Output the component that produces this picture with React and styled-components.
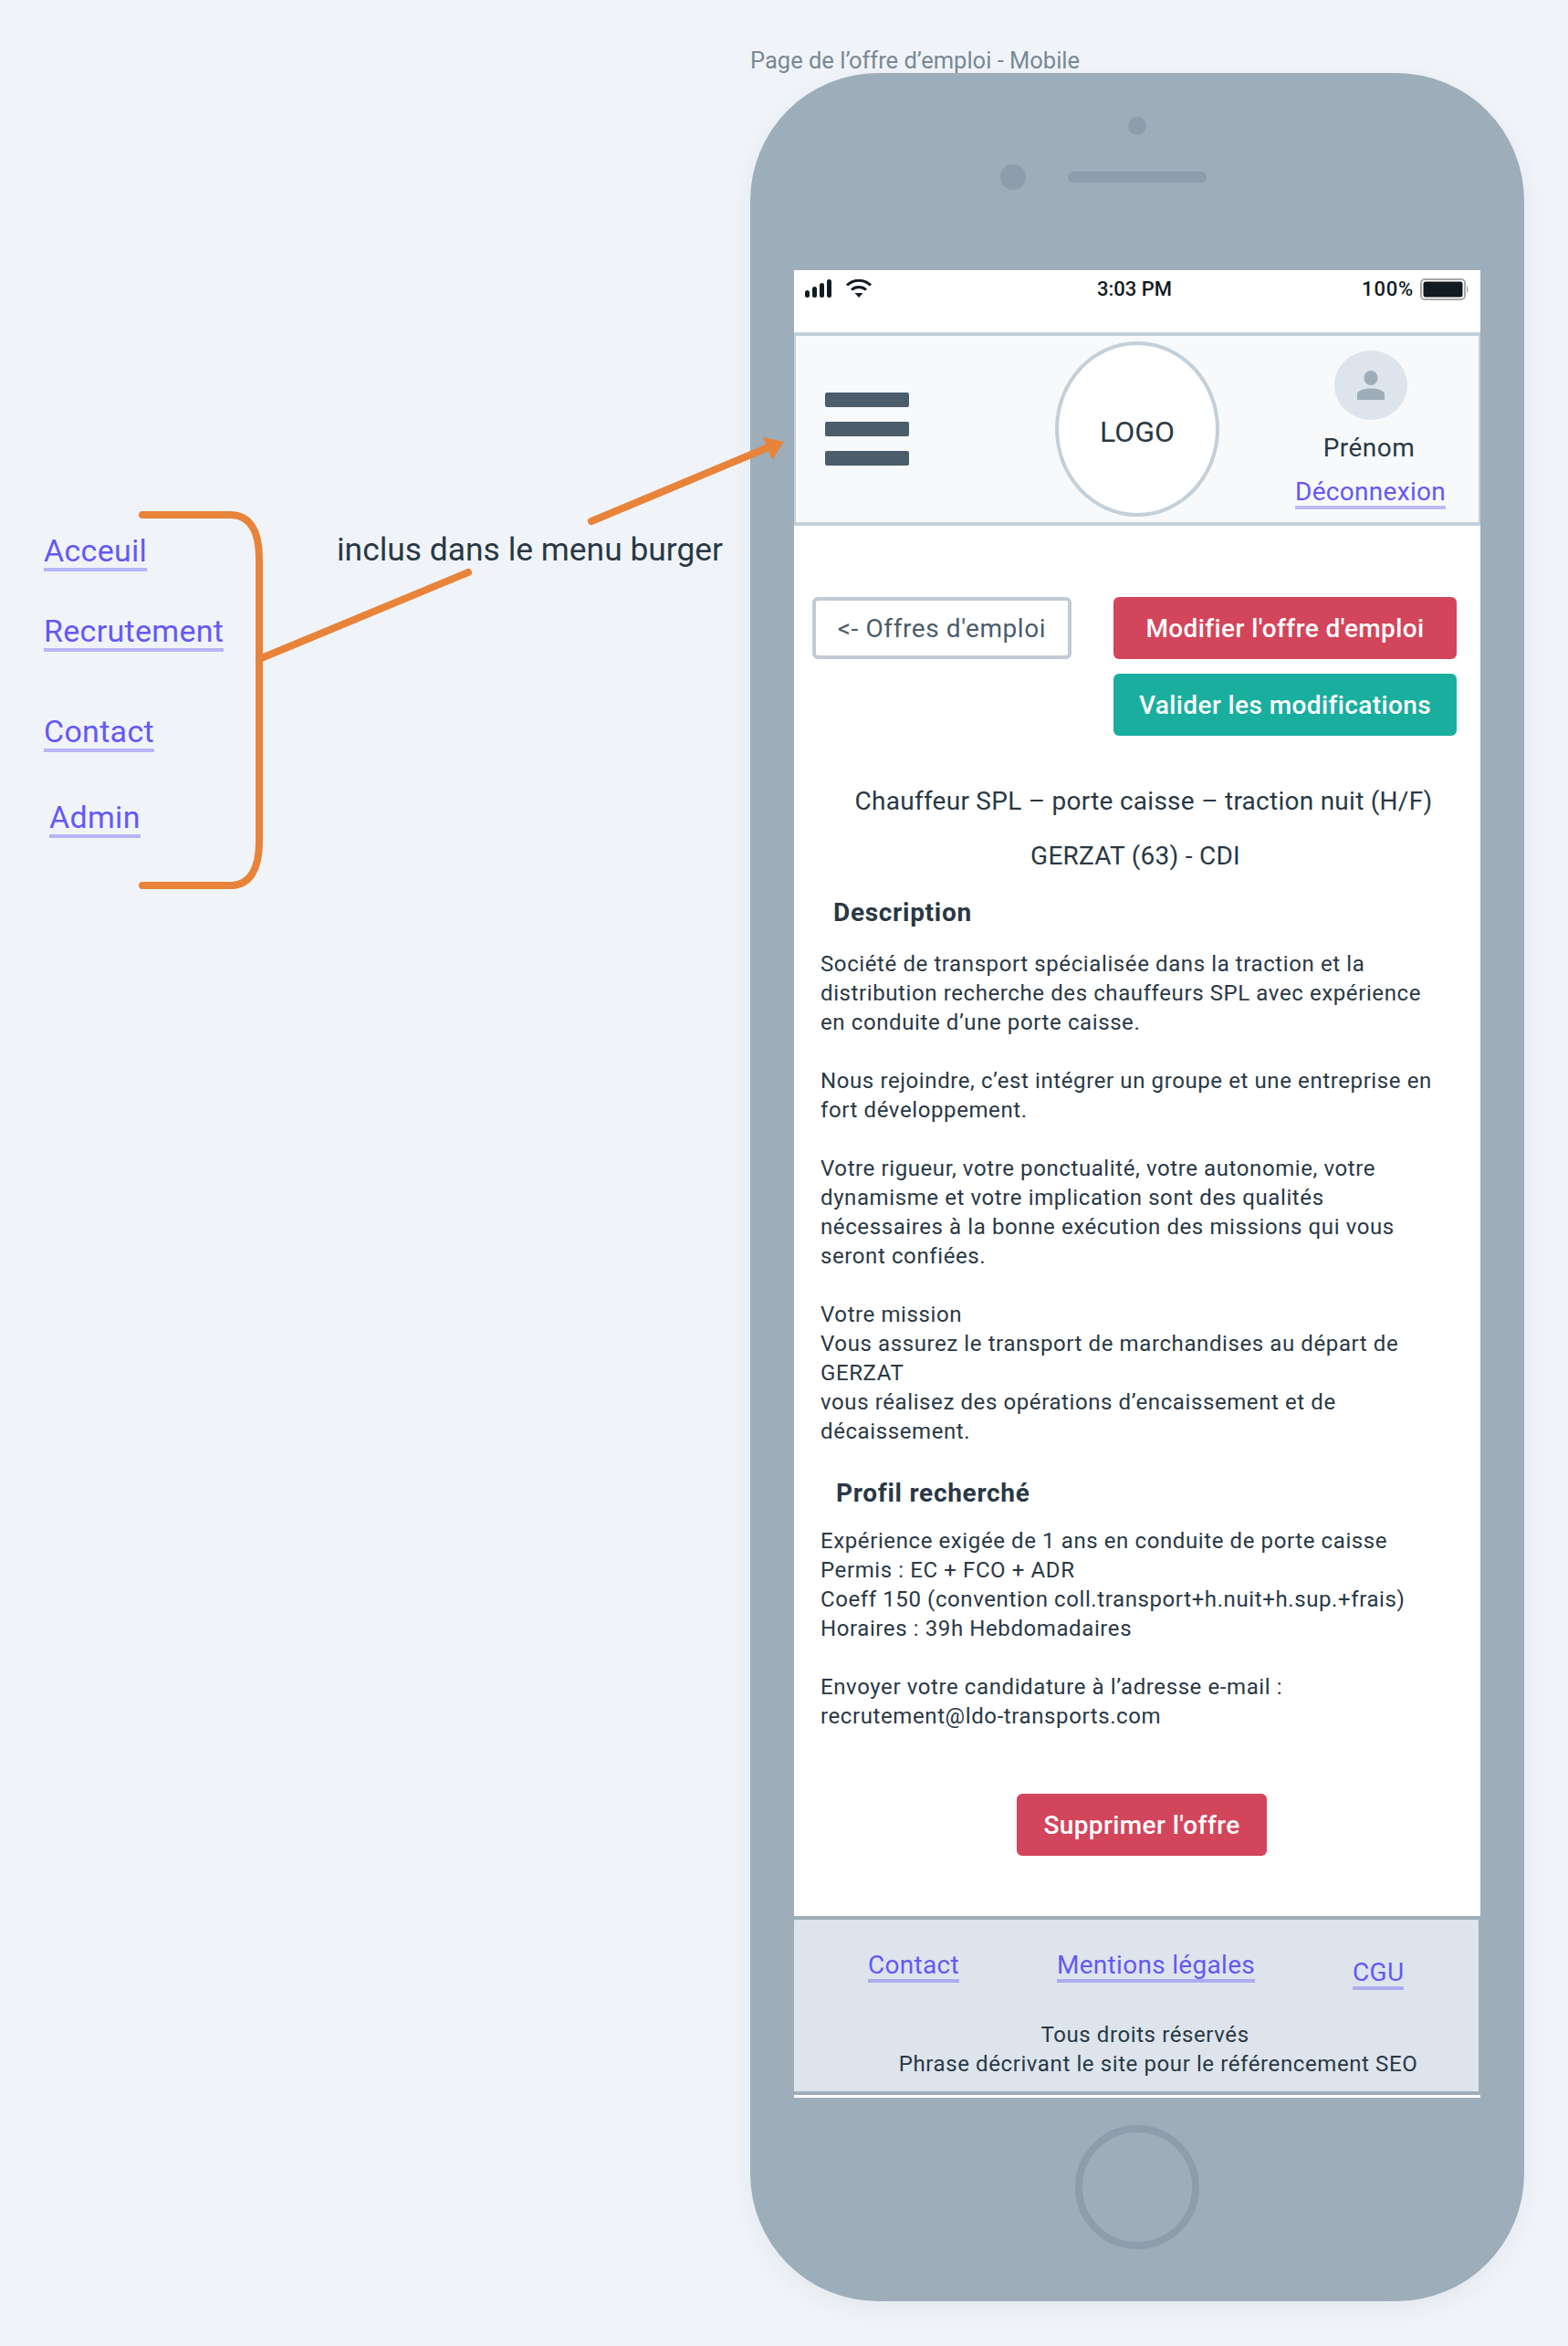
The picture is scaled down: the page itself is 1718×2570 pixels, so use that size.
import React from 'react';
import styled, { createGlobalStyle } from 'styled-components';

const GlobalStyle = createGlobalStyle`
	body {
		margin: 0;
		background: #f0f4f8;
		font-family: Roboto, "Liberation Sans", sans-serif;
		color: #293845;
	}
`;

const descriptionParagraphs = [
	['Société de transport spécialisée dans la traction et la', 'distribution recherche des chauffeurs SPL avec expérience', 'en conduite d’une porte caisse.'],
	['Nous rejoindre, c’est intégrer un groupe et une entreprise en', 'fort développement.'],
	['Votre rigueur, votre ponctualité, votre autonomie, votre', 'dynamisme et votre implication sont des qualités', 'nécessaires à la bonne exécution des missions qui vous', 'seront confiées.'],
	['Votre mission', 'Vous assurez le transport de marchandises au départ de', 'GERZAT', 'vous réalisez des opérations d’encaissement et de', 'décaissement.']
];

const profileParagraphs = [
	['Expérience exigée de 1 ans en conduite de porte caisse', 'Permis : EC + FCO + ADR', 'Coeff 150 (convention coll.transport+h.nuit+h.sup.+frais)', 'Horaires : 39h Hebdomadaires'],
	['Envoyer votre candidature à l’adresse e-mail :', 'recrutement@ldo-transports.com']
];

function TextBlock({ paragraphs }) {
	return paragraphs.map((lines) => (
		<Paragraph key={lines[0]}>
			{lines.map((line) => (
				<Line key={line}>{line}</Line>
			))}
		</Paragraph>
	));
}

function Connectors() {
	return (
		<ConnectorLayer viewBox="0 0 1718 2570">
			<g fill="none" stroke="#e8833a" strokeWidth="8" strokeLinecap="round">
				<path d="M156 564H252C274 564 284 582 284 612V922C284 952 274 970 252 970H156" />
				<path d="M284 722L513 627" />
				<path d="M648 571L842 490" />
			</g>
			<polygon points="836,479 859,484 846,504" fill="#e8833a" />
		</ConnectorLayer>
	);
}

function StatusIcons() {
	return (
		<SignalGroup>
			<svg width="30" height="20" viewBox="0 0 30 20" fill="#121a22">
				<rect x="0" y="12" width="5" height="8" rx="2.5" />
				<rect x="8" y="8" width="5" height="12" rx="2.5" />
				<rect x="16" y="4" width="5" height="16" rx="2.5" />
				<rect x="24" y="0" width="5" height="20" rx="2.5" />
			</svg>
			<svg width="30" height="20" viewBox="0 0 30 20" fill="none" stroke="#121a22" strokeWidth="3">
				<path d="M2 6.5C9.5 -0.5 20.5 -0.5 28 6.5" />
				<path d="M7 11.5C11.5 7.5 18.5 7.5 23 11.5" />
				<polygon points="10.5,15 19.5,15 15,20" fill="#121a22" stroke="none" />
			</svg>
		</SignalGroup>
	);
}

function Battery() {
	return (
		<svg width="54" height="24" viewBox="0 0 54 24">
			<rect x="1" y="1" width="48" height="22" rx="4" fill="#fff" stroke="#a8a8a8" strokeWidth="2" />
			<rect x="3.5" y="3.5" width="43" height="17" rx="2.5" fill="#121a22" />
			<path d="M51 8C53 9 53 15 51 16Z" fill="#a8a8a8" />
		</svg>
	);
}

function PersonIcon() {
	return (
		<svg width="30" height="32" viewBox="0 0 30 32" fill="#9eadba">
			<ellipse cx="15" cy="8" rx="7.5" ry="8" />
			<path d="M0 32V26C0 22 7 19.500 15 19.500S30 22 30 26V32Z" />
		</svg>
	);
}

export default function App() {
	return (
		<Page>
			<GlobalStyle />
			<Connectors />
			<Annotations>
				<MenuLinks>
					<MenuItem $top={0}><TextLink $size={34}>Acceuil</TextLink></MenuItem>
					<MenuItem $top={46}><TextLink $size={34}>Recrutement</TextLink></MenuItem>
					<MenuItem $top={68}><TextLink $size={34}>Contact</TextLink></MenuItem>
					<MenuItem $top={52} $left={6}><TextLink $size={34}>Admin</TextLink></MenuItem>
				</MenuLinks>
				<Note>inclus dans le menu burger</Note>
			</Annotations>
			<PhoneColumn>
				<Caption>Page de l’offre d’emploi - Mobile</Caption>
				<Phone>
					<FrontDot />
					<SensorRow>
						<Camera />
						<Speaker />
					</SensorRow>
					<Screen>
						<StatusBar>
							<StatusIcons />
							<Clock>3:03 PM</Clock>
							<BatteryGroup>
								<BatteryLabel>100%</BatteryLabel>
								<Battery />
							</BatteryGroup>
						</StatusBar>
						<Header>
							<Burger>
								<BurgerBar />
								<BurgerBar />
								<BurgerBar />
							</Burger>
							<Logo>LOGO</Logo>
							<UserBlock>
								<Avatar><PersonIcon /></Avatar>
								<UserName>Prénom</UserName>
								<TextLink $size={28}>Déconnexion</TextLink>
							</UserBlock>
						</Header>
						<Content>
							<Actions>
								<GhostButton>&lt;- Offres d'emploi</GhostButton>
								<ActionStack>
									<Button $bg="#d3455b">Modifier l'offre d'emploi</Button>
									<Button $bg="#1aae9f">Valider les modifications</Button>
								</ActionStack>
							</Actions>
							<JobTitle $shift={7} $top={54}>Chauffeur SPL – porte caisse – traction nuit (H/F)</JobTitle>
							<JobTitle $shift={-2} $top={24}>GERZAT (63) - CDI</JobTitle>
							<SectionTitle $left={43} $top={26}>Description</SectionTitle>
							<Body $top={22}>
								<TextBlock paragraphs={descriptionParagraphs} />
							</Body>
							<SectionTitle $left={46} $top={-1}>Profil recherché</SectionTitle>
							<Body $top={18}>
								<TextBlock paragraphs={profileParagraphs} />
							</Body>
							<DeleteRow>
								<Button $bg="#d3455b" $width={274}>Supprimer l'offre</Button>
							</DeleteRow>
						</Content>
						<Footer>
							<FooterLinks>
								<TextLink $size={28}>Contact</TextLink>
								<TextLink $size={28}>Mentions légales</TextLink>
								<LowerLink><TextLink $size={28}>CGU</TextLink></LowerLink>
							</FooterLinks>
							<LegalLine $shift={19}>Tous droits réservés</LegalLine>
							<LegalLine $shift={48}>Phrase décrivant le site pour le référencement SEO</LegalLine>
						</Footer>
					</Screen>
					<HomeButton />
				</Phone>
			</PhoneColumn>
		</Page>
	);
}

const Page = styled.div`
	position: relative;
	display: flex;
	width: 1718px;
	height: 2570px;
	overflow: hidden;
`;

const ConnectorLayer = styled.svg`
	position: absolute;
	top: 0;
	left: 0;
	width: 1718px;
	height: 2570px;
	pointer-events: none;
	z-index: 2;
`;

const Annotations = styled.div`
	display: flex;
	flex: 0 0 822px;
	box-sizing: border-box;
	padding: 578px 0 0 48px;
`;

const MenuLinks = styled.nav`
	display: flex;
	flex-direction: column;
	align-items: flex-start;
	width: 321px;
	padding-top: 6px;
`;

const MenuItem = styled.div`
	margin-top: ${(props) => props.$top}px;
	margin-left: ${(props) => props.$left || 0}px;
	line-height: 0;
`;

const TextLink = styled.a`
	display: inline-block;
	font-size: ${(props) => props.$size}px;
	line-height: ${(props) => Math.round(props.$size * 1.12)}px;
	letter-spacing: 0.3px;
	color: #6558f5;
	border-bottom: 4px solid rgba(101, 88, 245, 0.4);
`;

const Note = styled.div`
	font-size: 35.4px;
	line-height: 48px;
	white-space: nowrap;
`;

const PhoneColumn = styled.div`
	display: flex;
	flex-direction: column;
	align-items: flex-start;
	padding-top: 50px;
`;

const Caption = styled.div`
	height: 30px;
	font-size: 25.5px;
	line-height: 32px;
	color: #788896;
	white-space: nowrap;
`;

const Phone = styled.div`
	display: flex;
	flex-direction: column;
	align-items: center;
	box-sizing: border-box;
	width: 848px;
	height: 2441px;
	padding-top: 48px;
	background: #9eadba;
	border-radius: 140px;
	box-shadow: 0 8px 24px rgba(41, 56, 69, 0.06);
`;

const FrontDot = styled.div`
	width: 20px;
	height: 20px;
	border-radius: 50%;
	background: #8d9dab;
`;

const SensorRow = styled.div`
	display: grid;
	grid-template-columns: 1fr 152px 1fr;
	align-items: center;
	width: 300px;
	height: 28px;
	margin: 32px 0 88px;
`;

const Camera = styled.div`
	justify-self: end;
	width: 28px;
	height: 28px;
	margin-right: 46px;
	border-radius: 50%;
	background: #8d9dab;
`;

const Speaker = styled.div`
	height: 12px;
	border-radius: 6px;
	background: #8d9dab;
`;

const Screen = styled.div`
	display: flex;
	flex-direction: column;
	flex: 0 0 2002px;
	width: 752px;
	background: #fff;
`;

const StatusBar = styled.div`
	display: grid;
	grid-template-columns: 1fr auto 1fr;
	align-items: start;
	box-sizing: border-box;
	height: 68px;
	padding: 8px 12px 0;
`;

const SignalGroup = styled.div`
	display: flex;
	gap: 14px;
	padding-top: 2px;
`;

const Clock = styled.div`
	font-size: 22px;
	line-height: 26px;
	font-weight: 500;
	color: #121a22;
	margin-right: 6px;
`;

const BatteryGroup = styled.div`
	display: flex;
	justify-content: flex-end;
	align-items: center;
	gap: 7px;
`;

const BatteryLabel = styled.span`
	font-size: 22px;
	line-height: 26px;
	font-weight: 500;
	letter-spacing: 0.8px;
	color: #121a22;
`;

const Header = styled.header`
	display: flex;
	align-items: center;
	box-sizing: border-box;
	height: 212px;
	padding-left: 32px;
	background: #f7f9fb;
	border: solid #c3cfd9;
	border-width: 4px 2px;
`;

const Burger = styled.div`
	display: flex;
	flex-direction: column;
	gap: 16px;
	width: 92px;
`;

const BurgerBar = styled.div`
	height: 16px;
	border-radius: 2px;
	background: #4b5c6b;
`;

const Logo = styled.div`
	display: flex;
	align-items: center;
	justify-content: center;
	box-sizing: border-box;
	width: 180px;
	height: 192px;
	margin-left: 160px;
	padding-top: 6px;
	font-size: 32px;
	background: #fff;
	border: 4px solid #c3cfd9;
	border-radius: 50%;
`;

const UserBlock = styled.div`
	display: flex;
	flex-direction: column;
	align-items: center;
	width: 163px;
	margin-left: 84px;
	align-self: flex-start;
	padding-top: 16px;
`;

const Avatar = styled.div`
	display: flex;
	align-items: center;
	justify-content: center;
	width: 80px;
	height: 76px;
	border-radius: 50%;
	background: #dde4ec;
`;

const UserName = styled.div`
	margin: 14px 3px 15px 0;
	font-size: 28px;
	line-height: 34px;
	letter-spacing: 0.5px;
`;

const Content = styled.main`
	display: flex;
	flex-direction: column;
	padding-top: 78px;
	padding-bottom: 66px;
	flex: 0 0 auto;
`;

const Actions = styled.div`
	display: flex;
	align-items: flex-start;
	gap: 46px;
	padding-left: 20px;
`;

const ActionStack = styled.div`
	display: flex;
	flex-direction: column;
	gap: 16px;
	width: 376px;
`;

const Button = styled.button`
	box-sizing: border-box;
	width: ${(props) => (props.$width ? `${props.$width}px` : '100%')};
	height: 68px;
	padding: 0;
	font-family: inherit;
	font-size: 28px;
	font-weight: 500;
	letter-spacing: 0.4px;
	color: #fff;
	background: ${(props) => props.$bg};
	border: 0;
	border-radius: 6px;
`;

const GhostButton = styled.button`
	box-sizing: border-box;
	width: 284px;
	height: 68px;
	padding: 0;
	font-family: inherit;
	font-size: 28px;
	letter-spacing: 0.6px;
	color: #4b5c6b;
	background: #fff;
	border: 4px solid #c3c9d5;
	border-radius: 6px;
`;

const JobTitle = styled.div`
	margin-top: ${(props) => props.$top}px;
	padding-left: ${(props) => Math.max(props.$shift, 0) * 2}px;
	padding-right: ${(props) => Math.max(-props.$shift, 0) * 2}px;
	font-size: 28px;
	line-height: 36px;
	letter-spacing: 0.26px;
	text-align: center;
`;

const SectionTitle = styled.h2`
	margin: ${(props) => props.$top}px 0 0 ${(props) => props.$left}px;
	font-size: 28px;
	line-height: 36px;
	font-weight: 700;
	letter-spacing: 0.7px;
`;

const Body = styled.div`
	display: flex;
	flex-direction: column;
	gap: 32px;
	margin: ${(props) => props.$top}px 0 35px 29px;
`;

const Paragraph = styled.p`
	margin: 0;
	font-size: 24px;
	line-height: 32px;
	letter-spacing: 0.6px;
`;

const Line = styled.span`
	display: block;
	white-space: nowrap;
`;

const DeleteRow = styled.div`
	display: flex;
	padding: 34px 0 0 244px;
`;

const Footer = styled.footer`
	width: 750px;
	height: 188px;
	background: #dde4ec;
	border-top: 4px solid #9eadba;
	border-right: 2px solid #9eadba;
	border-bottom: 4px solid #9eadba;
`;

const FooterLinks = styled.div`
	display: flex;
	align-items: flex-start;
	gap: 107px;
	padding: 34px 0 0 81px;
	height: 76px;
`;

const LowerLink = styled.div`
	margin-top: 8px;
	line-height: 0;
`;

const LegalLine = styled.div`
	padding-left: ${(props) => props.$shift}px;
	font-size: 24px;
	line-height: 32px;
	letter-spacing: 0.6px;
	text-align: center;
`;

const HomeButton = styled.div`
	box-sizing: border-box;
	flex: 0 0 136px;
	width: 136px;
	margin-top: 30px;
	border: 8px solid #8d9dab;
	border-radius: 50%;
`;
